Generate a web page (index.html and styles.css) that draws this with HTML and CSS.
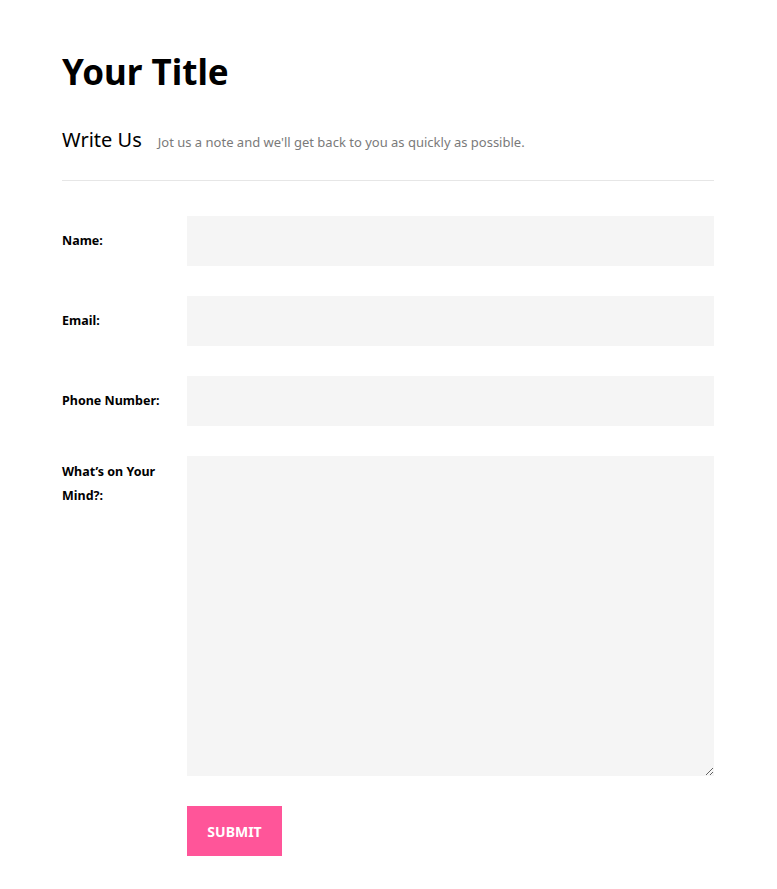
FILE: index.html
```html
<!DOCTYPE html>
<html lang="en">
<head>
<meta charset="utf-8">
<title>Your Title</title>
<link rel="stylesheet" href="styles.css">
</head>
<body>
<main class="page">
  <h1 class="title">Your Title</h1>
  <div class="intro">
    <h2 class="intro-head">Write Us</h2>
    <p class="intro-text">Jot us a note and we'll get back to you as quickly as possible.</p>
  </div>
  <hr class="divider">
  <form class="form">
    <div class="row">
      <label class="label" for="name">Name:</label>
      <input class="field" id="name" type="text">
    </div>
    <div class="row">
      <label class="label" for="email">Email:</label>
      <input class="field" id="email" type="email">
    </div>
    <div class="row">
      <label class="label" for="phone">Phone Number:</label>
      <input class="field" id="phone" type="tel">
    </div>
    <div class="row row-top">
      <label class="label label-multi" for="mind">What’s on Your Mind?:</label>
      <textarea class="field area" id="mind"></textarea>
    </div>
    <div class="row">
      <span></span>
      <div><button class="submit" type="button">SUBMIT</button></div>
    </div>
  </form>
</main>
</body>
</html>
```
FILE: styles.css
```css
html, body {
  margin: 0;
  padding: 0;
  background: #ffffff;
}
body {
  font-family: "Noto Sans", "Open Sans", sans-serif;
  color: #000;
}
.page {
  width: 652px;
  padding: 49px 0 33px 62px;
}
.title {
  margin: 0;
  font-size: 35px;
  line-height: 46px;
  font-weight: 700;
}
.intro {
  display: flex;
  align-items: baseline;
  gap: 16px;
  margin-top: 31px;
}
.intro-head {
  margin: 0;
  font-size: 20px;
  font-weight: 400;
  line-height: 28px;
}
.intro-text {
  margin: 0;
  font-size: 13px;
  color: #7a7a7a;
}
.divider {
  border: 0;
  border-top: 1px solid #e6e6e6;
  margin: 26px 0 35px;
}
.form {
  display: flex;
  flex-direction: column;
  gap: 30px;
}
.row {
  display: grid;
  grid-template-columns: 125px 527px;
  align-items: center;
}
.row-top {
  align-items: start;
}
.label {
  font-size: 12.5px;
  font-weight: 700;
  line-height: 24px;
  padding-right: 10px;
}
.label-multi {
  padding-top: 4px;
}
.field {
  display: block;
  box-sizing: border-box;
  width: 527px;
  height: 50px;
  border: 0;
  background: #f5f5f5;
  margin: 0;
  padding: 0 12px;
  font: inherit;
}
.area {
  height: 320px;
  padding: 12px;
  resize: vertical;
}
.submit {
  display: block;
  width: 95px;
  height: 50px;
  border: 0;
  background: #ff5599;
  color: #fff;
  font-family: "Noto Sans", "Open Sans", sans-serif;
  font-size: 14px;
  font-weight: 700;
  padding: 0;
}
```
